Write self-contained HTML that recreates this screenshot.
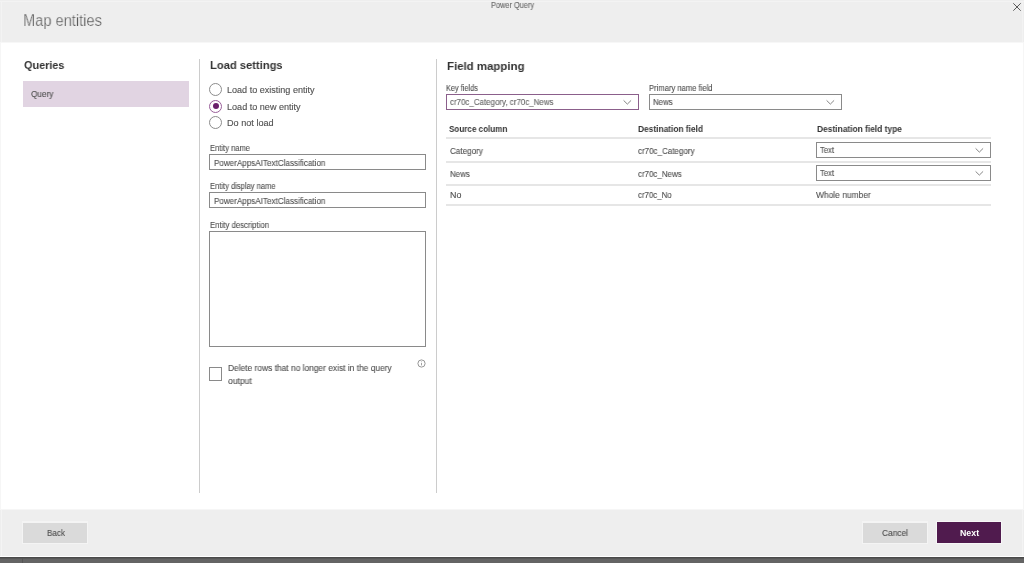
<!DOCTYPE html>
<html><head><meta charset="utf-8"><title>Map entities</title>
<style>
html,body{margin:0;padding:0;width:1024px;height:563px;overflow:hidden;background:#fff;}
body{position:relative;font-family:"Liberation Sans",sans-serif;}
.t{position:absolute;white-space:nowrap;line-height:1;transform-origin:0 0;will-change:transform;}
.r{position:absolute;box-sizing:content-box;}
svg.r{overflow:visible}
</style></head><body>
<div class="r" style="left:0px;top:0px;width:1024px;height:42px;background:#eeeeee"></div>
<div class="r" style="left:0px;top:1px;width:1024px;height:1px;background:#f3f3f3"></div>
<div class="r" style="left:0px;top:42px;width:1024px;height:1px;background:#f7f7f7"></div>
<div class="r" style="left:1px;top:1px;width:1px;height:41px;background:#f3f3f3"></div>
<div class="r" style="left:1022px;top:1px;width:1px;height:41px;background:#f3f3f3"></div>
<div class="r" style="left:0px;top:42px;width:1px;height:468px;background:#f6f6f6"></div>
<div class="r" style="left:1023px;top:42px;width:1px;height:468px;background:#f6f6f6"></div>
<div class="t" style="left:22.78px;top:13.00px;font-size:16px;color:#5a5a5a;font-weight:400;transform:scaleX(0.9153);-webkit-text-stroke:0.25px #eeeeee;">Map entities</div>
<div class="t" style="left:490.50px;top:2.00px;font-size:8.2px;color:#6a6a6a;font-weight:400;transform:scaleX(0.9000);-webkit-text-stroke:0.12px currentColor;">Power Query</div>
<svg class="r" style="left:1012px;top:1.5px" width="10" height="10" viewBox="0 0 10 10"><path d="M1.3 1.3 L8.7 8.7 M8.7 1.3 L1.3 8.7" fill="none" stroke="#5a5a5a" stroke-width="1"/></svg>
<div class="r" style="left:0px;top:509px;width:1024px;height:1px;background:#f6f6f6"></div>
<div class="r" style="left:0px;top:510px;width:1024px;height:46px;background:#eeeeee"></div>
<div class="r" style="left:1px;top:510px;width:1px;height:46px;background:#f4f4f4"></div>
<div class="r" style="left:1022px;top:510px;width:1px;height:46px;background:#f4f4f4"></div>
<div class="r" style="left:0px;top:556px;width:1024px;height:1px;background:#ffffff"></div>
<div class="r" style="left:0px;top:557px;width:1024px;height:6px;background:#646464"></div>
<div class="r" style="left:0px;top:557px;width:1024px;height:1px;background:#4a4a4a"></div>
<div class="r" style="left:0px;top:558px;width:1024px;height:1px;background:#575757"></div>
<div class="r" style="left:22px;top:558px;width:1px;height:5px;background:#555555"></div>
<div class="r" style="left:22px;top:521px;width:66px;height:23px;background:#f4f4f4"></div>
<div class="r" style="left:23px;top:523px;width:64px;height:20px;background:#dadada"></div>
<div class="t" style="left:46.80px;top:529.00px;font-size:9px;color:#505050;font-weight:400;transform:scaleX(0.9000);-webkit-text-stroke:0.12px currentColor;">Back</div>
<div class="r" style="left:862px;top:521px;width:66px;height:23px;background:#f4f4f4"></div>
<div class="r" style="left:863px;top:523px;width:64px;height:20px;background:#dadada"></div>
<div class="t" style="left:882.00px;top:529.00px;font-size:9.3px;color:#505050;font-weight:400;transform:scaleX(0.9000);-webkit-text-stroke:0.12px currentColor;">Cancel</div>
<div class="r" style="left:936px;top:521px;width:66px;height:23px;background:#f7f7f7"></div>
<div class="r" style="left:937px;top:522px;width:64px;height:21px;background:#501b4e"></div>
<div class="t" style="left:960.00px;top:529.00px;font-size:8.8px;color:#ffffff;font-weight:700;transform:scaleX(0.9895);">Next</div>
<div class="r" style="left:199px;top:59px;width:1px;height:434px;background:#cccccc"></div>
<div class="r" style="left:436px;top:59px;width:1px;height:434px;background:#cccccc"></div>
<div class="t" style="left:23.70px;top:60.00px;font-size:11.8px;color:#333;font-weight:700;transform:scaleX(0.9205);">Queries</div>
<div class="r" style="left:23px;top:81px;width:166px;height:26px;background:#e1d4e2"></div>
<div class="t" style="left:30.90px;top:90.00px;font-size:8.8px;color:#505050;font-weight:400;transform:scaleX(0.9333);-webkit-text-stroke:0.12px currentColor;">Query</div>
<div class="t" style="left:210.00px;top:60.00px;font-size:11.8px;color:#333;font-weight:700;transform:scaleX(0.9474);">Load settings</div>
<div class="r" style="left:209px;top:83.0px;width:11px;height:11px;border:1px solid #8c8c8c;border-radius:50%"></div>
<div class="t" style="left:226.50px;top:86.00px;font-size:9px;color:#505050;font-weight:400;transform:scaleX(1.0057);-webkit-text-stroke:0.12px currentColor;">Load to existing entity</div>
<div class="r" style="left:209px;top:99.5px;width:11px;height:11px;border:1px solid #9a5f9a;border-radius:50%"></div>
<div class="r" style="left:212.5px;top:103px;width:6px;height:6px;background:#6a1f6a;border-radius:50%"></div>
<div class="t" style="left:226.50px;top:103.00px;font-size:9px;color:#505050;font-weight:400;transform:scaleX(1.0082);-webkit-text-stroke:0.12px currentColor;">Load to new entity</div>
<div class="r" style="left:209px;top:116.3px;width:11px;height:11px;border:1px solid #8c8c8c;border-radius:50%"></div>
<div class="t" style="left:226.50px;top:119.00px;font-size:9px;color:#505050;font-weight:400;transform:scaleX(1.0130);-webkit-text-stroke:0.12px currentColor;">Do not load</div>
<div class="t" style="left:209.75px;top:144.00px;font-size:8.6px;color:#505050;font-weight:400;transform:scaleX(0.8811);-webkit-text-stroke:0.12px currentColor;">Entity name</div>
<div class="r" style="left:209px;top:154px;width:215px;height:14px;border:1px solid #8a8a8a;background:#fff"></div>
<div class="t" style="left:213.60px;top:159.00px;font-size:8.8px;color:#505050;font-weight:400;transform:scaleX(0.9190);-webkit-text-stroke:0.12px currentColor;">PowerAppsAITextClassification</div>
<div class="t" style="left:209.75px;top:182.00px;font-size:8.6px;color:#505050;font-weight:400;transform:scaleX(0.8804);-webkit-text-stroke:0.12px currentColor;">Entity display name</div>
<div class="r" style="left:209px;top:192px;width:215px;height:14px;border:1px solid #8a8a8a;background:#fff"></div>
<div class="t" style="left:213.60px;top:197.00px;font-size:8.8px;color:#505050;font-weight:400;transform:scaleX(0.9190);-webkit-text-stroke:0.12px currentColor;">PowerAppsAITextClassification</div>
<div class="t" style="left:209.90px;top:221.00px;font-size:8.6px;color:#505050;font-weight:400;transform:scaleX(0.9015);-webkit-text-stroke:0.12px currentColor;">Entity description</div>
<div class="r" style="left:209px;top:231px;width:215px;height:114px;border:1px solid #8a8a8a;background:#fff"></div>
<div class="r" style="left:209px;top:367px;width:11px;height:12px;border:1px solid #8a8a8a"></div>
<div class="t" style="left:227.60px;top:364.00px;font-size:8.8px;color:#505050;font-weight:400;transform:scaleX(0.9535);-webkit-text-stroke:0.12px currentColor;">Delete rows that no longer exist in the query</div>
<div class="t" style="left:227.70px;top:377.00px;font-size:8.8px;color:#505050;font-weight:400;transform:scaleX(0.9720);-webkit-text-stroke:0.12px currentColor;">output</div>
<svg class="r" style="left:416.7px;top:359.3px" width="9" height="9" viewBox="0 0 9 9"><circle cx="4.5" cy="4.5" r="3.6" fill="none" stroke="#8a8a8a" stroke-width="0.9"/><path d="M4.5 3.9 V6.4 M4.5 2.5 V3.1" stroke="#8a8a8a" stroke-width="0.8"/></svg>
<div class="t" style="left:446.80px;top:61.00px;font-size:11.8px;color:#333;font-weight:700;transform:scaleX(0.9696);">Field mapping</div>
<div class="t" style="left:446.40px;top:84.00px;font-size:8.6px;color:#505050;font-weight:400;transform:scaleX(0.8541);-webkit-text-stroke:0.12px currentColor;">Key fields</div>
<div class="r" style="left:446px;top:94px;width:191px;height:14px;border:1px solid #8b5f8b;background:#fff"></div>
<div class="t" style="left:450.00px;top:98.00px;font-size:8.8px;color:#666;font-weight:400;transform:scaleX(0.9017);-webkit-text-stroke:0.12px currentColor;">cr70c_Category, cr70c_News</div>
<svg class="r" style="left:623px;top:100px" width="9" height="5" viewBox="0 0 9 5"><path d="M0.6 0.4 L4.35 4.1 L8.1 0.4" fill="none" stroke="#777" stroke-width="0.9"/></svg>
<div class="t" style="left:649.00px;top:84.00px;font-size:8.6px;color:#505050;font-weight:400;transform:scaleX(0.8873);-webkit-text-stroke:0.12px currentColor;">Primary name field</div>
<div class="r" style="left:649px;top:94px;width:191px;height:14px;border:1px solid #8a8a8a;background:#fff"></div>
<div class="t" style="left:652.60px;top:98.00px;font-size:8.8px;color:#505050;font-weight:400;transform:scaleX(0.8955);-webkit-text-stroke:0.12px currentColor;">News</div>
<svg class="r" style="left:826px;top:100px" width="9" height="5" viewBox="0 0 9 5"><path d="M0.6 0.4 L4.35 4.1 L8.1 0.4" fill="none" stroke="#777" stroke-width="0.9"/></svg>
<div class="t" style="left:449.30px;top:125.00px;font-size:8.8px;color:#333;font-weight:700;transform:scaleX(0.9175);">Source column</div>
<div class="t" style="left:637.70px;top:125.00px;font-size:8.8px;color:#333;font-weight:700;transform:scaleX(0.9500);">Destination field</div>
<div class="t" style="left:816.60px;top:125.00px;font-size:8.8px;color:#333;font-weight:700;transform:scaleX(0.9551);">Destination field type</div>
<div class="r" style="left:446px;top:137px;width:545px;height:2px;background:#e6e6e6"></div>
<div class="r" style="left:446px;top:160.5px;width:545px;height:2px;background:#e6e6e6"></div>
<div class="r" style="left:446px;top:183.5px;width:545px;height:2px;background:#e6e6e6"></div>
<div class="r" style="left:446px;top:203.5px;width:545px;height:2px;background:#e6e6e6"></div>
<div class="t" style="left:449.80px;top:147.00px;font-size:8.8px;color:#505050;font-weight:400;transform:scaleX(0.9222);-webkit-text-stroke:0.12px currentColor;">Category</div>
<div class="t" style="left:637.70px;top:147.00px;font-size:8.8px;color:#505050;font-weight:400;transform:scaleX(0.9097);-webkit-text-stroke:0.12px currentColor;">cr70c_Category</div>
<div class="t" style="left:449.90px;top:170.00px;font-size:8.8px;color:#505050;font-weight:400;transform:scaleX(0.9045);-webkit-text-stroke:0.12px currentColor;">News</div>
<div class="t" style="left:637.70px;top:170.00px;font-size:8.8px;color:#505050;font-weight:400;transform:scaleX(0.9021);-webkit-text-stroke:0.12px currentColor;">cr70c_News</div>
<div class="t" style="left:449.90px;top:191.00px;font-size:8.8px;color:#505050;font-weight:400;transform:scaleX(1.0091);-webkit-text-stroke:0.12px currentColor;">No</div>
<div class="t" style="left:637.70px;top:191.00px;font-size:8.8px;color:#505050;font-weight:400;transform:scaleX(0.8947);-webkit-text-stroke:0.12px currentColor;">cr70c_No</div>
<div class="t" style="left:816.20px;top:191.00px;font-size:8.8px;color:#505050;font-weight:400;transform:scaleX(0.9561);-webkit-text-stroke:0.12px currentColor;">Whole number</div>
<div class="r" style="left:816px;top:142px;width:173px;height:14px;border:1px solid #8a8a8a;background:#fff"></div>
<div class="t" style="left:820.30px;top:146.00px;font-size:8.8px;color:#505050;font-weight:400;transform:scaleX(0.8688);-webkit-text-stroke:0.12px currentColor;">Text</div>
<svg class="r" style="left:975px;top:148px" width="9" height="5" viewBox="0 0 9 5"><path d="M0.6 0.4 L4.35 4.1 L8.1 0.4" fill="none" stroke="#777" stroke-width="0.9"/></svg>
<div class="r" style="left:816px;top:165px;width:173px;height:14px;border:1px solid #8a8a8a;background:#fff"></div>
<div class="t" style="left:820.30px;top:169.00px;font-size:8.8px;color:#505050;font-weight:400;transform:scaleX(0.8688);-webkit-text-stroke:0.12px currentColor;">Text</div>
<svg class="r" style="left:975px;top:171px" width="9" height="5" viewBox="0 0 9 5"><path d="M0.6 0.4 L4.35 4.1 L8.1 0.4" fill="none" stroke="#777" stroke-width="0.9"/></svg>
</body></html>
